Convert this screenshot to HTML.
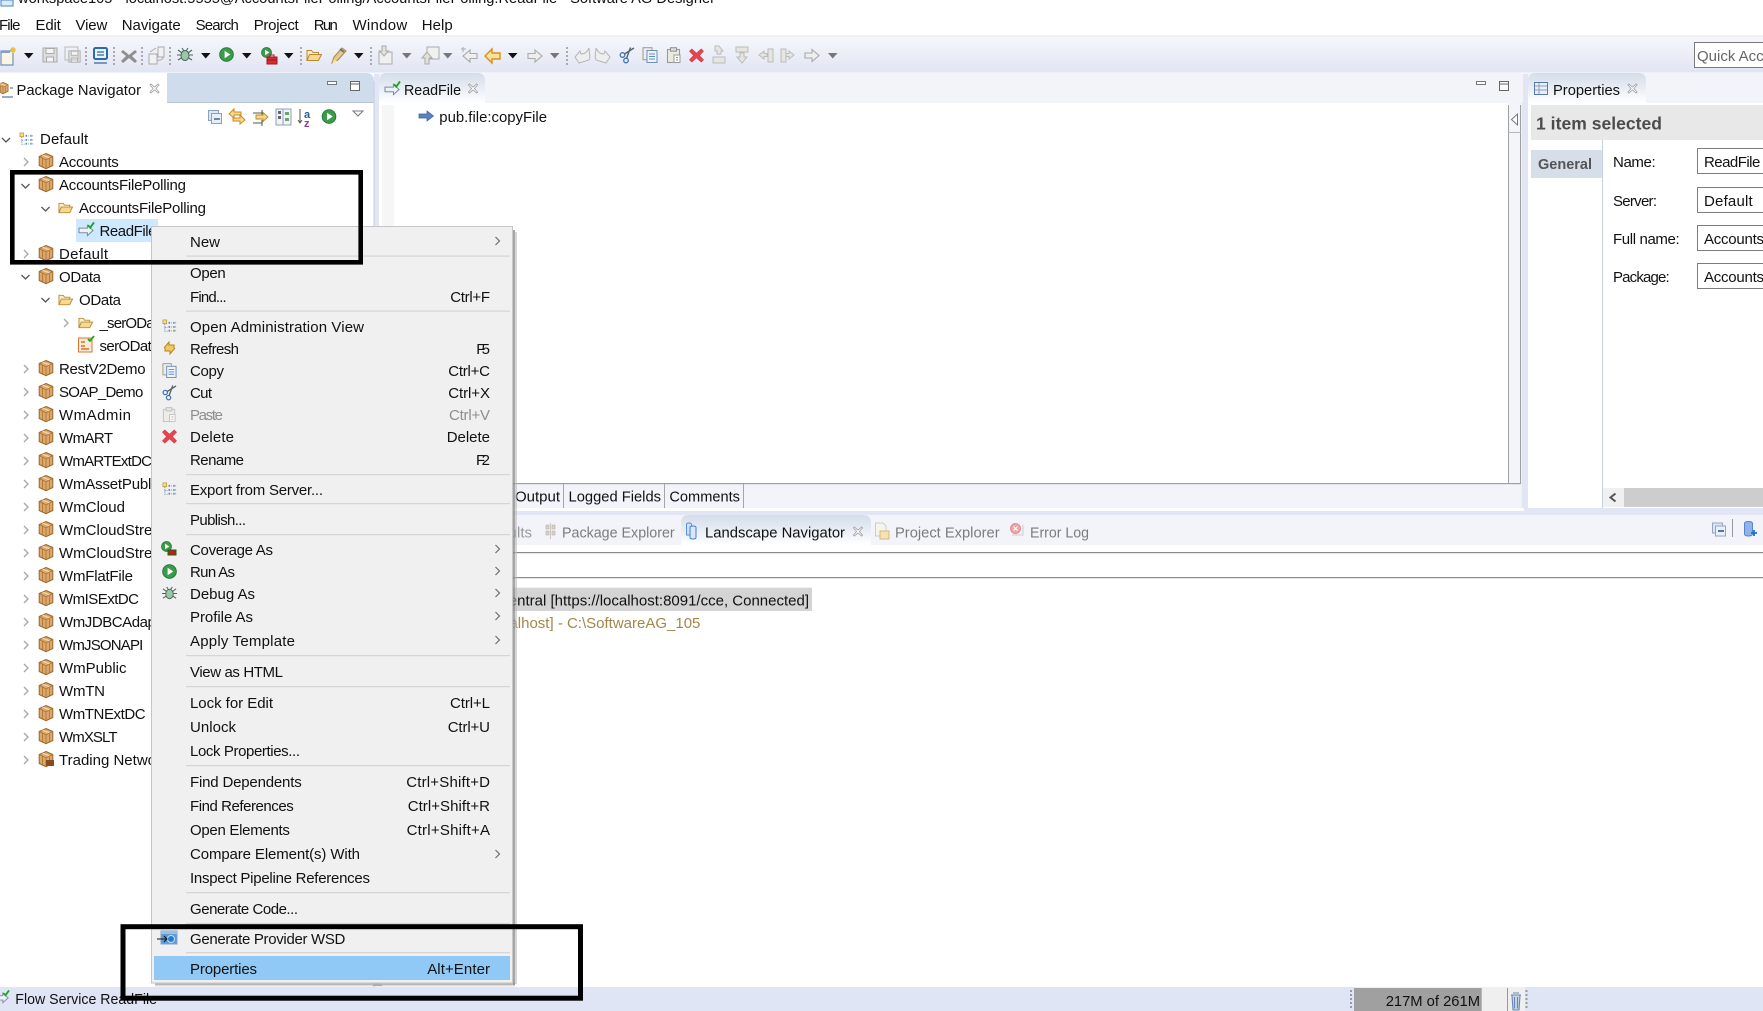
<!DOCTYPE html>
<html><head><meta charset="utf-8"><style>
html,body{margin:0;padding:0;background:#fff;width:1763px;height:1011px;overflow:hidden}
svg{display:block}
text{font-family:"Liberation Sans",sans-serif;font-size:15px;fill:#111;white-space:pre}
.g{fill:#7c7c7c}.d{fill:#8e8e8e}.e{text-anchor:end}
.b{font-weight:bold}
</style></head><body>
<svg width="1763" height="1011" viewBox="0 0 1763 1011" xmlns="http://www.w3.org/2000/svg">
<defs>
<linearGradient id="tb" x1="0" y1="0" x2="0" y2="1"><stop offset="0" stop-color="#f6f7fb"/><stop offset="1" stop-color="#e1e5f3"/></linearGradient>
<linearGradient id="tab" x1="0" y1="0" x2="0" y2="1"><stop offset="0" stop-color="#d3dde9"/><stop offset=".5" stop-color="#e8edf5"/><stop offset="1" stop-color="#fff"/></linearGradient>
<symbol id="pkg" viewBox="0 0 16 16" overflow="visible"><path d="M8 .5 14.8 3.5V12.5L8 15.7 1.2 12.5V3.5Z" fill="#dba76d" stroke="#9c662a"/><path d="M1.2 3.5 8 6.8 14.8 3.5M8 6.8V15.7M4.5 5.2V14M11.5 5.2V14" fill="none" stroke="#a9722f" stroke-width=".8"/><path d="M4.5 2.2 11.5 4.8" stroke="#f3d9b1" stroke-width="1.2"/></symbol>
<symbol id="fld" viewBox="0 0 16 16" overflow="visible"><path d="M1 13.5V3.5h4.5l1.5 2h5.5v2" fill="#fbeec9" stroke="#b98a35"/><path d="M1 13.5 3.5 7.5H15.5L12.5 13.5Z" fill="#f6d98f" stroke="#b98a35"/></symbol>
<symbol id="cr" viewBox="0 0 10 10" overflow="visible"><path d="M3 1 7 5 3 9" fill="none" stroke="#a6a6a6" stroke-width="1.3"/></symbol>
<symbol id="cm" viewBox="0 0 10 10" overflow="visible"><path d="M3 1 7 5 3 9" fill="none" stroke="#666" stroke-width="1.1"/></symbol>
<symbol id="cd" viewBox="0 0 10 10" overflow="visible"><path d="M1 3 5 7 9 3" fill="none" stroke="#555" stroke-width="1.3"/></symbol>
<symbol id="svc" viewBox="0 0 18 16" overflow="visible"><path d="M1 6.5H10V3.5L16 9 10 14.5V11.5H1Z" fill="#eef1f6" stroke="#7c8da3" stroke-width="1.1"/><path d="M10.5 3.5 13 6 17 .5" fill="none" stroke="#1da31d" stroke-width="2"/></symbol>
<symbol id="tree" viewBox="0 0 16 16" overflow="visible"><rect x="1" y="1" width="4" height="4" fill="#f4dd83" stroke="#b79b3a" stroke-width=".8"/><path d="M3 5V13H6M3 9H6" fill="none" stroke="#7a8ba8" stroke-width=".9" stroke-dasharray="1.5 1"/><path d="M7 8.5h3M7 12.5h3M12 8.5h3M12 12.5h3M7 4h3M12 4h3" stroke="#5d83b5" stroke-width="2" stroke-dasharray="1.5 1"/></symbol>
<symbol id="x" viewBox="0 0 12 12" overflow="visible"><path d="M2 1 6 4.5 10 1 11 2 7.500 6 11 10 10 11 6 7.500 2 11 1 10 4.500 6 1 2Z" fill="#fff" stroke="#999" stroke-width=".8"/></symbol>
<symbol id="run" viewBox="0 0 16 16" overflow="visible"><circle cx="8" cy="8" r="7.3" fill="#3a9c4a" stroke="#25763a"/><path d="M6 4 12 8 6 12Z" fill="#fff"/></symbol>
<symbol id="bug" viewBox="0 0 16 16" overflow="visible"><path d="M1 3 5 6M15 3 11 6M0 8H4M16 8H12M1 13 5 10.5M15 13 11 10.5M5 1 7 4M11 1 9 4" stroke="#49695c" stroke-width="1.1"/><ellipse cx="8" cy="8.5" rx="4" ry="5" fill="#9cc6a8" stroke="#49695c"/></symbol>
<symbol id="rx" viewBox="0 0 16 16" overflow="visible"><path d="M3 1 8 5.5 13 1 15.5 3.5 11 8 15.5 12.5 13 15 8 10.5 3 15 .5 12.5 5 8 .5 3.5Z" fill="#e8434f" stroke="#c53a44" stroke-width=".6"/></symbol>
<symbol id="cp" viewBox="0 0 16 16" overflow="visible"><rect x="1" y=".7" width="9" height="12" fill="#e9eef5" stroke="#a59a74"/><rect x="5" y="3.5" width="10" height="12" fill="#eef3fa" stroke="#6f8db5"/><path d="M7 7h6M7 9.500h6M7 12h6" stroke="#5d8fc9"/></symbol>
<symbol id="sc" viewBox="0 0 16 16" overflow="visible"><circle cx="3.500" cy="8" r="2.300" fill="none" stroke="#3f76b3" stroke-width="1.300"/><circle cx="7" cy="13.500" r="2.300" fill="none" stroke="#3f76b3" stroke-width="1.300"/><path d="M5.500 7 15 1M7.500 11.500 11.500 .5" stroke="#56626f" stroke-width="1.400"/></symbol>
<symbol id="pa" viewBox="0 0 16 16" overflow="visible"><rect x="1.500" y="2.500" width="12" height="13" fill="#ece9df" stroke="#9a9a9a" stroke-width="1.100"/><rect x="4.500" y=".7" width="6" height="3.500" fill="#ddd" stroke="#909090"/><rect x="8" y="8" width="6" height="7.500" fill="#fff" stroke="#9a9a9a"/><path d="M10 10.500h2M10 13h2" stroke="#888"/></symbol>
<symbol id="da" viewBox="0 0 10 6" overflow="visible"><path d="M0 0H9.500L4.750 5.500Z" fill="#111"/></symbol>
<symbol id="dg" viewBox="0 0 10 6" overflow="visible"><path d="M0 0H9.500L4.750 5.500Z" fill="#777"/></symbol>
<symbol id="arr" viewBox="0 0 16 14" overflow="visible"><path d="M8 1 15 7 8 13V9.500H1V4.500H8Z" fill="#eee" stroke="#aaa" stroke-width="1.100"/></symbol>
<symbol id="sav" viewBox="0 0 16 16" overflow="visible"><path d="M1 1H15V15H1Z" fill="#ddd" stroke="#aaa"/><rect x="4" y="1.500" width="8" height="5" fill="#f4f4f4" stroke="#aaa"/><rect x="4.500" y="10" width="7" height="5" fill="#f4f4f4" stroke="#aaa"/></symbol>
</defs>

<!-- title + menu -->
<rect width="1763" height="35" fill="#fff"/>
<path d="M1 0H13V6H1Z" fill="#dfeaf7" stroke="#3f86c9"/>
<text x="18" y="3" textLength="697" lengthAdjust="spacingAndGlyphs">workspace105 - localhost:5555@AccountsFilePolling/AccountsFilePolling:ReadFile - Software AG Designer</text>
<text x="-1" y="30" textLength="21.500">File</text><text x="35.500" y="30" textLength="25.300">Edit</text><text x="75.500" y="30" textLength="31.800">View</text><text x="121.700" y="30" textLength="59">Navigate</text><text x="195.600" y="30" textLength="43.200">Search</text><text x="253.700" y="30" textLength="45">Project</text><text x="313.800" y="30" textLength="24">Run</text><text x="352.500" y="30" textLength="54.700">Window</text><text x="421.700" y="30" textLength="31">Help</text>

<!-- toolbar -->
<rect y="35" width="1763" height="2" fill="#f0f0f0"/>
<rect y="37" width="1763" height="35.700" fill="url(#tb)"/>
<rect y="72.700" width="1763" height="1" fill="#fff"/>
<rect y="73.700" width="1763" height="441" fill="#e1e5f4"/>

<g id="tbicons">
<path d="M1 51H13V65H1Z" fill="#fbf5e2" stroke="#6f93bd" stroke-width="1.200"/><path d="M1 51H10V53H1Z" fill="#7fa0cc"/><path d="M13 47v6M10 50h6M11 48l4 4M15 48l-4 4" stroke="#e9c13a" stroke-width="1.300"/>
<use href="#da" x="24" y="53" width="10" height="6"/>
<use href="#sav" x="42" y="47" width="16" height="16"/>
<use href="#sav" x="68" y="50" width="13" height="13"/><rect x="65" y="47" width="13" height="13" fill="none" stroke="#bbb"/>
<path d="M86 47V65M114 47V65M142 47V65M170 47V65M301 47V65M371 47V65M567 47V65" stroke="#9a9a9a" stroke-width="1.600" stroke-dasharray="2 2"/>
<rect x="94" y="48" width="13" height="11" rx="1.500" fill="#eaf1fa" stroke="#2d6aa8" stroke-width="2"/><path d="M94 63H107M97 52h7M97 55h7" stroke="#2d6aa8" stroke-width="1.300"/>
<path d="M123 50l6 5 6-5 2 2-5 4 5 5-2 2-6-5-6 5-2-2 5-5-5-4Z" fill="#8e8e8e"/>
<rect x="149" y="54" width="8" height="10" fill="#f1f1f1" stroke="#aaa"/><rect x="158" y="47" width="6" height="10" fill="#f1f1f1" stroke="#aaa"/><path d="M150 52l6-4M157 60c4 1 6-1 6-3" fill="none" stroke="#aaa"/>
<use href="#bug" x="177" y="47" width="16" height="16"/>
<use href="#da" x="201" y="53" width="10" height="6"/>
<use href="#run" x="219" y="47" width="15" height="15"/>
<use href="#da" x="242" y="53" width="10" height="6"/>
<use href="#run" x="261" y="47" width="11" height="11"/><path d="M267 57h10v7h-10Z" fill="#dd2a32" stroke="#9c1b20"/><path d="M270 57v-2h4v2M267 60h10" stroke="#9c1b20" fill="none"/>
<use href="#da" x="284" y="53" width="10" height="6"/>
<use href="#fld" x="306" y="47" width="16" height="16"/>
<path d="M332 63l2-6 8-9 4 3-8 9Z" fill="#e4c88f" stroke="#a98440"/><path d="M332 64l2-5 3 2Z" fill="#f7e59a"/><path d="M340 49l4 3" stroke="#6f6f8a" stroke-width="2"/>
<use href="#da" x="354" y="53" width="10" height="6"/>
<rect x="379" y="52" width="13" height="12" fill="#f0f0f0" stroke="#aaa"/><path d="M382 46h4v5h2.500l-4.500 5-4.500-5h2.500Z" fill="#e2e2d9" stroke="#aaa"/>
<use href="#dg" x="402" y="53" width="10" height="6"/>
<rect x="427" y="47" width="12" height="12" fill="#f0f0f0" stroke="#aaa"/><path d="M425 64v-6h-3l5-6 5 6h-3v6Z" fill="#e2e2d9" stroke="#aaa"/>
<use href="#dg" x="443" y="53" width="10" height="6"/>
<g transform="matrix(-1 0 0 1 478 0)"><use href="#arr" x="0" y="49" width="16" height="14"/></g>
<path d="M463 47v5M461 49h5" stroke="#aaa"/>
<path d="M485 56 492 49V53H500V59H492V63Z" fill="#fbe29b" stroke="#d98e1e" stroke-width="1.400"/>
<use href="#da" x="508" y="53" width="10" height="6"/>
<use href="#arr" x="527" y="49" width="16" height="14"/>
<use href="#dg" x="550" y="53" width="10" height="6"/>
<path d="M575 57l4 6 10-3c2-3 0-7 0-12-2 4-4 6-8 6l-1-3Z" fill="#eee" stroke="#b5b5b5"/>
<path d="M610 57l-4 6-10-3c-2-3 0-7 0-12 2 4 4 6 8 6l1-3Z" fill="#eee" stroke="#b5b5b5"/>
<use href="#sc" x="619" y="47" width="16" height="16"/>
<use href="#cp" x="642" y="47" width="16" height="16"/>
<use href="#pa" x="666" y="47" width="16" height="16"/>
<use href="#rx" x="689" y="48" width="15" height="15"/>
<path d="M715 46l4-0 4 5h-2v3h-4v-3h-2Zm-2 11h12v6h-12Z" fill="#e6e6de" stroke="#bbb"/>
<path d="M736 47h12v5h-12ZM740 53h4v4h3l-5 6-5-6h3Z" fill="#e6e6de" stroke="#bbb"/>
<path d="M759 55l5-4v2.500h3v3h-3v2.500ZM768 49h5v13h-5Z" fill="#e6e6de" stroke="#bbb"/>
<path d="M794 55l-5-4v2.500h-3v3h3v2.500ZM781 49h5v13h-5Z" fill="#e6e6de" stroke="#bbb"/>
<use href="#arr" x="804" y="48" width="16" height="15"/>
<use href="#dg" x="828" y="53" width="10" height="6"/>
</g>
<rect x="1694.500" y="42.500" width="75" height="25" fill="#fff" stroke="#7a7a7a"/>
<text x="1697" y="61" style="fill:#666">Quick Access</text>

<!-- left pane -->
<rect x="0" y="73" width="374" height="914" fill="#fff"/>
<path d="M167 73H366q8 0 8 8V102.500H167Z" fill="#cfdceb"/>
<path d="M0 73H159q8 0 8 8V102H0Z" fill="#fff"/>
<rect x="167" y="102" width="207" height="1" fill="#b9c5d6"/>
<rect x="373.500" y="81" width="1" height="906" fill="#c8cfdf"/>
<use href="#pkg" x="-3" y="82" width="12" height="12"/><path d="M2 97H13M10 88H13" stroke="#2b5f96"/>
<text x="16.500" y="95" textLength="124.500" lengthAdjust="spacingAndGlyphs">Package Navigator</text>
<use href="#x" x="149" y="83" width="11" height="11"/>
<rect x="327.500" y="81.500" width="9" height="3" fill="#fff" stroke="#777"/>
<rect x="350.500" y="81.500" width="9" height="9" fill="#fff" stroke="#666"/><path d="M350 84H360" stroke="#666"/>
<g>
<rect x="208.500" y="110.500" width="10" height="10" fill="#dde6f2" stroke="#8aa0bd"/><rect x="211.500" y="113.500" width="10" height="10" fill="#e8eef6" stroke="#8aa0bd"/><path d="M214 119h6" stroke="#2a5d95" stroke-width="1.400"/>
<path d="M229 114l5-5v3h7v3h-7v3ZM245 120l-5-5v3h-7v3h7v3Z" fill="#f8dc8e" stroke="#c98a20"/>
<path d="M253 113H262M262 110V116M253 123H262M262 120V126" stroke="#555" fill="none"/>
<path d="M256 115H263V112.500L268 117 263 121.500V119H256Z" fill="#f5d986" stroke="#b98a25" stroke-width=".9"/>
<rect x="276" y="109" width="15" height="16" fill="#f0f3f8" stroke="#8aa0bd"/><path d="M283 109V125" stroke="#8aa0bd"/><rect x="278" y="111" width="3" height="3" fill="#666"/><rect x="278" y="116" width="3" height="3" fill="#666"/><rect x="285" y="112" width="4" height="3" fill="#6ba36b"/><rect x="285" y="118" width="4" height="3" fill="#6ba36b"/>
<path d="M300 109V122M298 120l2 3 2-3" stroke="#555" fill="none"/>
<text x="304" y="118" style="font-size:11px;font-weight:bold;fill:#245d9a">a</text><text x="304" y="127" style="font-size:11px;font-weight:bold;fill:#8a3f8f">z</text>
<use href="#run" x="321.500" y="109" width="15" height="15"/>
<path d="M353 111H363L358 116Z" fill="#fff" stroke="#777"/>
</g>

<!-- tree -->
<use href="#cd" x="1" y="135" width="10" height="10"/><use href="#tree" x="19" y="132" width="15" height="15"/><text x="40" y="144" textLength="48.200">Default</text>
<use href="#cr" x="21" y="157" width="10" height="10"/><use href="#pkg" x="38" y="153" width="16" height="16"/><text x="59" y="167" textLength="59.700">Accounts</text>
<use href="#cd" x="20.500" y="181" width="10" height="10"/><use href="#pkg" x="38" y="176" width="16" height="16"/><text x="59" y="190" textLength="127">AccountsFilePolling</text>
<use href="#cd" x="40.500" y="204" width="10" height="10"/><use href="#fld" x="58" y="200" width="15" height="15"/><text x="79" y="213" textLength="127">AccountsFilePolling</text>
<rect x="76" y="219" width="82" height="23" fill="#cde8ff"/><use href="#svc" x="78" y="222" width="17" height="15"/><text x="99.500" y="236" textLength="57">ReadFile</text>
<use href="#cr" x="21" y="249" width="10" height="10"/><use href="#pkg" x="38" y="245" width="16" height="16"/><text x="59" y="259" textLength="49">Default</text>
<use href="#cd" x="20.500" y="272" width="10" height="10"/><use href="#pkg" x="38" y="268" width="16" height="16"/><text x="59" y="282" textLength="42">OData</text>
<use href="#cd" x="40.500" y="295" width="10" height="10"/><use href="#fld" x="58" y="292" width="15" height="15"/><text x="79" y="305" textLength="42">OData</text>
<use href="#cr" x="61" y="318" width="10" height="10"/><use href="#fld" x="78" y="315" width="15" height="15"/><text x="99.500" y="328" textLength="66">_serOData</text>
<path d="M78.500 338H92V352H78.500Z" fill="#fbeadb" stroke="#d8742a"/><path d="M81 342h4M81 346h4M81 349h8" stroke="#d8742a" stroke-width="1.500"/><path d="M88 339 90 341 94 336" fill="none" stroke="#1da31d" stroke-width="1.800"/><text x="99.500" y="351" textLength="60">serOData</text>
<use href="#cr" x="21" y="364" width="10" height="10"/><use href="#pkg" x="38" y="360" width="16" height="16"/><text x="59" y="374" textLength="86.600">RestV2Demo</text>
<use href="#cr" x="21" y="387" width="10" height="10"/><use href="#pkg" x="38" y="383" width="16" height="16"/><text x="59" y="397" textLength="84.300">SOAP_Demo</text>
<use href="#cr" x="21" y="410" width="10" height="10"/><use href="#pkg" x="38" y="406" width="16" height="16"/><text x="59" y="420" textLength="72">WmAdmin</text>
<use href="#cr" x="21" y="433" width="10" height="10"/><use href="#pkg" x="38" y="429" width="16" height="16"/><text x="59" y="443" textLength="54">WmART</text>
<use href="#cr" x="21" y="456" width="10" height="10"/><use href="#pkg" x="38" y="452" width="16" height="16"/><text x="59" y="466" textLength="93">WmARTExtDC</text>
<use href="#cr" x="21" y="479" width="10" height="10"/><use href="#pkg" x="38" y="475" width="16" height="16"/><text x="59" y="489" textLength="124">WmAssetPublisher</text>
<use href="#cr" x="21" y="502" width="10" height="10"/><use href="#pkg" x="38" y="498" width="16" height="16"/><text x="59" y="512" textLength="66">WmCloud</text>
<use href="#cr" x="21" y="525" width="10" height="10"/><use href="#pkg" x="38" y="521" width="16" height="16"/><text x="59" y="535">WmCloudStreams</text>
<use href="#cr" x="21" y="548" width="10" height="10"/><use href="#pkg" x="38" y="544" width="16" height="16"/><text x="59" y="558">WmCloudStreamsAnalytics</text>
<use href="#cr" x="21" y="571" width="10" height="10"/><use href="#pkg" x="38" y="567" width="16" height="16"/><text x="59" y="581" textLength="74">WmFlatFile</text>
<use href="#cr" x="21" y="594" width="10" height="10"/><use href="#pkg" x="38" y="590" width="16" height="16"/><text x="59" y="604" textLength="80">WmISExtDC</text>
<use href="#cr" x="21" y="617" width="10" height="10"/><use href="#pkg" x="38" y="613" width="16" height="16"/><text x="59" y="627" textLength="113">WmJDBCAdapter</text>
<use href="#cr" x="21" y="640" width="10" height="10"/><use href="#pkg" x="38" y="636" width="16" height="16"/><text x="59" y="650" textLength="84.300">WmJSONAPI</text>
<use href="#cr" x="21" y="663" width="10" height="10"/><use href="#pkg" x="38" y="659" width="16" height="16"/><text x="59" y="673" textLength="67.500">WmPublic</text>
<use href="#cr" x="21" y="686" width="10" height="10"/><use href="#pkg" x="38" y="682" width="16" height="16"/><text x="59" y="696" textLength="46">WmTN</text>
<use href="#cr" x="21" y="709" width="10" height="10"/><use href="#pkg" x="38" y="705" width="16" height="16"/><text x="59" y="719" textLength="86.600">WmTNExtDC</text>
<use href="#cr" x="21" y="732" width="10" height="10"/><use href="#pkg" x="38" y="728" width="16" height="16"/><text x="59" y="742" textLength="58.500">WmXSLT</text>
<use href="#cr" x="21" y="755" width="10" height="10"/><use href="#pkg" x="38" y="751" width="16" height="16"/><rect x="46" y="760" width="8" height="6" fill="#8a4a20"/><text x="59" y="765">Trading Networks</text>

<!-- editor -->
<rect x="379" y="73" width="1144" height="30" fill="#f3f4fa"/>
<rect x="379" y="102.500" width="1142.700" height="405.500" fill="#f3f4fa"/>
<rect x="379" y="103" width="1129" height="380" fill="#fff"/>
<path d="M379 103V81q0-8 8-8H477q8 0 8 8V103Z" fill="url(#tab)"/>
<use href="#svc" x="384" y="81" width="17" height="15"/>
<text x="404" y="95" textLength="57" lengthAdjust="spacingAndGlyphs">ReadFile</text>
<use href="#x" x="467.500" y="83" width="11" height="11"/>
<rect x="1476.500" y="81.500" width="9" height="3" fill="#fff" stroke="#777"/>
<rect x="1499.500" y="81.500" width="9" height="9" fill="#fff" stroke="#666"/><path d="M1499 84H1509" stroke="#666"/>
<rect x="382" y="105" width="12" height="378" fill="#f6f6f6"/>
<path d="M419 114H427V111L433.500 116 427 121V118H419Z" fill="#5b83c4" stroke="#3c5f9c" stroke-width=".7"/>
<text x="439.300" y="122" textLength="107.700" lengthAdjust="spacingAndGlyphs">pub.file:copyFile</text>
<rect x="1508" y="105" width="13" height="378" fill="#f4f5fa"/>
<path d="M1508.500 105V483M1520.500 105V483" stroke="#a0a0a0"/><path d="M1508 132.500H1521" stroke="#b5b5b5"/>
<path d="M1517.500 114V125L1511.500 119.500Z" fill="#fff" stroke="#777"/>
<rect x="379" y="483" width="1142" height="1.200" fill="#a0a0a0"/>
<path d="M563.500 484V508M664.500 484V508M743.500 484V508" stroke="#a6a6a6"/>
<text x="515" y="501.500" textLength="45">Output</text><text x="568.500" y="501.500" textLength="92.500" lengthAdjust="spacingAndGlyphs">Logged Fields</text><text x="669.400" y="501.500" textLength="70.600" lengthAdjust="spacingAndGlyphs">Comments</text>
<rect x="379" y="508" width="1145" height="3" fill="#fff"/>

<!-- properties -->
<rect x="1528" y="73" width="235" height="435" fill="#fff"/>
<rect x="1528" y="73" width="235" height="30" fill="#f3f4fa"/>
<path d="M1528 103V81q0-8 8-8H1638q8 0 8 8V103Z" fill="url(#tab)"/>
<rect x="1534.500" y="82.500" width="13" height="12" fill="#e9eef7" stroke="#5b7aa8"/><path d="M1535 86H1547M1535 90H1547M1539 83V94" stroke="#8aa0bd"/>
<text x="1553" y="95" textLength="67" lengthAdjust="spacingAndGlyphs">Properties</text>
<use href="#x" x="1627" y="83" width="11" height="11"/>
<rect x="1531" y="105" width="232" height="35" fill="#e8e8e8"/>
<text x="1536" y="129.500" class="b" style="font-size:17.500px;fill:#4c4c4c" textLength="126">1 item selected</text>
<rect x="1531" y="150" width="71" height="28" fill="#d6dfe9"/>
<text x="1538" y="169" class="b" style="font-size:14.500px;fill:#555" textLength="54">General</text>
<rect x="1602" y="140" width="1" height="368" fill="#c5d0e0"/>
<text x="1613" y="167" textLength="42.700">Name:</text><text x="1613" y="206" textLength="44">Server:</text><text x="1613" y="244" textLength="66.700">Full name:</text><text x="1613" y="282" textLength="56.700">Package:</text>
<g fill="#fff" stroke="#7d7d7d"><rect x="1697.500" y="148.500" width="80" height="25"/><rect x="1697.500" y="187.500" width="80" height="25"/><rect x="1697.500" y="225.500" width="80" height="25"/><rect x="1697.500" y="263.500" width="80" height="25"/></g>
<text x="1704" y="167" textLength="56.300">ReadFile</text><text x="1704" y="206" textLength="48.700">Default</text><text x="1704" y="244" textLength="60">Accounts</text><text x="1704" y="282" textLength="60">Accounts</text>
<rect x="1603" y="488" width="21" height="19" fill="#f0f0f0"/><rect x="1624" y="488" width="139" height="19" fill="#cdcdcd"/>
<path d="M1615.500 493.500 1610.500 497.500 1615.500 501.500" fill="none" stroke="#555" stroke-width="2"/>

<!-- bottom pane -->
<rect x="379" y="515" width="1384" height="30" fill="#f3f4fa"/>
<rect x="379" y="511" width="1384" height="4" fill="#e1e5f4"/>
<rect x="379" y="545" width="1384" height="442" fill="#fff"/>
<rect x="379" y="552" width="1384" height="1.200" fill="#8a8a8a"/>
<rect x="379" y="577" width="1384" height="1.200" fill="#8a8a8a"/>
<text x="482" y="537.500" style="fill:#999">Results</text>
<path d="M546 525h3v4h-3ZM552 525h3v4h-3ZM546 531h3v4h-3ZM552 531h3v4h-3ZM550.500 523V539" fill="#e6d2bd" stroke="#aaa" stroke-width=".6"/>
<text x="562" y="537.500" class="g" textLength="112.700" lengthAdjust="spacingAndGlyphs">Package Explorer</text>
<path d="M681 545V523q0-8 8-8H863q8 0 8 8V545Z" fill="url(#tab)"/>
<path d="M686.500 524.500q0-1.500 2.500-1.500t2.500 1.500V535H686.500Z" fill="#cfe0f7" stroke="#5a8fd8"/><path d="M690 527.500q0-1.500 3-1.500t3 1.500V537.500q0 1.500-3 1.500t-3-1.500Z" fill="#d8e7fa" stroke="#3f7fd4"/>
<text x="705" y="537.500" textLength="140" lengthAdjust="spacingAndGlyphs">Landscape Navigator</text>
<use href="#x" x="852.500" y="526" width="11" height="11"/>
<path d="M875.500 523H883L886 526V536H875.500Z" fill="#f5f5ee" stroke="#ccc"/><path d="M880 531H889V539H880Z" fill="#f6e3b5" stroke="#d6b878"/>
<text x="895" y="537.500" class="g" textLength="104.600" lengthAdjust="spacingAndGlyphs">Project Explorer</text>
<path d="M1012 535h11v-10" fill="none" stroke="#ccc"/><circle cx="1015.500" cy="528.500" r="5" fill="#eba6a6" stroke="#dd9090"/><path d="M1013.500 526.500l4 4M1017.500 526.500l-4 4" stroke="#fff" stroke-width="1.100"/>
<text x="1030" y="537.500" class="g" textLength="59" lengthAdjust="spacingAndGlyphs">Error Log</text>
<rect x="1712.500" y="523" width="10" height="10" fill="#dde6f2" stroke="#93a5bd"/><rect x="1715.500" y="526" width="10" height="10" fill="#eaf0f8" stroke="#93a5bd"/><path d="M1718 531H1724" stroke="#1e4e88" stroke-width="1.500"/>
<rect x="1732" y="519" width="1" height="18" fill="#999"/>
<path d="M1744.500 523.500q0-2 4-2t4 2V534q0 2-4 2t-4-2Z" fill="#8fb3ec" stroke="#5b83c4"/><path d="M1751 533H1757M1754 530V536" stroke="#1e6ee0" stroke-width="1.800"/>
<rect x="450" y="587.700" width="362" height="23.300" fill="#d4d4d4"/>
<text x="809" y="605.500" class="e">Central [https://localhost:8091/cce, Connected]</text>
<text x="700.400" y="628" class="e" style="fill:#a48648">[localhost] - C:\SoftwareAG_105</text>

<!-- status bar -->
<rect x="0" y="987" width="1763" height="24" fill="#e0e5f5"/>
<use href="#svc" x="-6" y="990" width="16" height="14"/>
<text x="15.300" y="1004" textLength="141.700" lengthAdjust="spacingAndGlyphs">Flow Service ReadFile</text>
<path d="M1351 990V1008M1526.500 990V1008" stroke="#9a9a9a" stroke-width="2" stroke-dasharray="2 2"/>
<rect x="1354" y="987" width="171" height="24" fill="#efefef"/>
<rect x="1354" y="988" width="127.700" height="23" fill="#a0a0a0"/>
<rect x="1507" y="988" width="1" height="23" fill="#999"/>
<text x="1385.700" y="1006" textLength="94.300" lengthAdjust="spacingAndGlyphs">217M of 261M</text>
<path d="M1511 995H1521M1513 993H1519M1512 995.500 1513 1010H1519L1520 995.500M1514.500 997V1008.500M1517.500 997V1008.500" fill="#cbd6e8" stroke="#6688b5" stroke-width="1.100"/>

<!-- context menu -->
<rect x="513" y="230" width="2" height="755" fill="#888" opacity=".75"/>
<rect x="515" y="232" width="2" height="752" fill="#bbb" opacity=".6"/>
<rect x="155" y="983" width="360" height="2" fill="#888" opacity=".6"/>
<rect x="155" y="985" width="360" height="1.500" fill="#bbb" opacity=".5"/>
<path d="M372 986 378 982 383 986Z" fill="#aab"/>
<rect x="151.500" y="226.500" width="361" height="756.500" fill="#f0f0f0" stroke="#c6c6c6"/>
<g fill="#d5d5d5"><rect x="186" y="255.500" width="324" height="1.200"/><rect x="186" y="310.500" width="324" height="1.200"/><rect x="186" y="474" width="324" height="1.200"/><rect x="186" y="503" width="324" height="1.200"/><rect x="186" y="534" width="324" height="1.200"/><rect x="186" y="655" width="324" height="1.200"/><rect x="186" y="686" width="324" height="1.200"/><rect x="186" y="765" width="324" height="1.200"/><rect x="186" y="892" width="324" height="1.200"/><rect x="186" y="923" width="324" height="1.200"/><rect x="186" y="952" width="324" height="1.200"/></g>
<rect x="154" y="956" width="356" height="24" fill="#90c8f6"/>

<g>
<text x="190" y="247" textLength="30">New</text>
<text x="190" y="278" textLength="35.700">Open</text>
<text x="190" y="302" textLength="36.700">Find...</text><text x="490" y="302" class="e" textLength="39.800">Ctrl+F</text>
<text x="190" y="332" textLength="174">Open Administration View</text>
<text x="190" y="354" textLength="49">Refresh</text><text x="490" y="354" class="e" textLength="13.700">F5</text>
<text x="190" y="376" textLength="34">Copy</text><text x="490" y="376" class="e" textLength="41.700">Ctrl+C</text>
<text x="190" y="398" textLength="22">Cut</text><text x="490" y="398" class="e" textLength="41.700">Ctrl+X</text>
<text x="190" y="420" class="d" textLength="33">Paste</text><text x="490" y="420" class="e d" textLength="41">Ctrl+V</text>
<text x="190" y="442" textLength="44">Delete</text><text x="490" y="442" class="e" textLength="43.300">Delete</text>
<text x="190" y="465" textLength="54">Rename</text><text x="490" y="465" class="e" textLength="14">F2</text>
<text x="190" y="495" textLength="133">Export from Server...</text>
<text x="190" y="525" textLength="56">Publish...</text>
<text x="190" y="555" textLength="83">Coverage As</text>
<text x="190" y="577" textLength="45">Run As</text>
<text x="190" y="599" textLength="65">Debug As</text>
<text x="190" y="622" textLength="63">Profile As</text>
<text x="190" y="646" textLength="105">Apply Template</text>
<text x="190" y="677" textLength="93">View as HTML</text>
<text x="190" y="708" textLength="83">Lock for Edit</text><text x="490" y="708" class="e" textLength="40">Ctrl+L</text>
<text x="190" y="732" textLength="46">Unlock</text><text x="490" y="732" class="e" textLength="42.300">Ctrl+U</text>
<text x="190" y="756" textLength="110">Lock Properties...</text>
<text x="190" y="787" textLength="111.700">Find Dependents</text><text x="490" y="787" class="e" textLength="83.800">Ctrl+Shift+D</text>
<text x="190" y="811" textLength="103.700">Find References</text><text x="490" y="811" class="e" textLength="82.300">Ctrl+Shift+R</text>
<text x="190" y="835" textLength="99.900">Open Elements</text><text x="490" y="835" class="e" textLength="83.400">Ctrl+Shift+A</text>
<text x="190" y="859" textLength="170">Compare Element(s) With</text>
<text x="190" y="883" textLength="180">Inspect Pipeline References</text>
<text x="190" y="914" textLength="108">Generate Code...</text>
<text x="190" y="944" textLength="155.400">Generate Provider WSD</text>
<text x="190" y="974" textLength="67">Properties</text><text x="490" y="974" class="e" textLength="62.800">Alt+Enter</text>
</g>
<g><use href="#cm" x="492.500" y="236" width="10" height="10"/><use href="#cm" x="492.500" y="544" width="10" height="10"/><use href="#cm" x="492.500" y="566" width="10" height="10"/><use href="#cm" x="492.500" y="588" width="10" height="10"/><use href="#cm" x="492.500" y="611" width="10" height="10"/><use href="#cm" x="492.500" y="635" width="10" height="10"/><use href="#cm" x="492.500" y="849" width="10" height="10"/></g>
<!-- menu icons -->
<use href="#tree" x="162" y="319" width="15" height="15"/>
<g transform="translate(162 341)"><path d="M2 7l5-6v3h5v3M13 7l-5 6v-3H3V7" fill="#f3c95e" stroke="#b58420"/></g>
<use href="#cp" x="162" y="363" width="15" height="15"/>
<use href="#sc" x="162" y="385" width="15" height="15"/>
<g opacity=".5"><use href="#pa" x="162" y="407" width="15" height="15"/></g>
<use href="#rx" x="162" y="429" width="15" height="15"/>
<use href="#tree" x="162" y="482" width="15" height="15"/>
<use href="#run" x="161" y="541" width="11" height="11"/><rect x="168" y="550" width="8" height="5" fill="#c91a1a" stroke="#0d6b0d"/>
<use href="#run" x="162" y="564" width="15" height="15"/>
<use href="#bug" x="162" y="586" width="15" height="15"/>
<rect x="161" y="931" width="16" height="13" fill="#5d9bd8" stroke="#7fa3c9"/><rect x="161" y="931" width="16" height="3" fill="#9fbfe0"/><circle cx="171" cy="939" r="3.500" fill="#2a78c8" stroke="#bfe0fa"/><path d="M157 939H167M164 936l3 3-3 3" stroke="#111" fill="none"/>

<!-- black annotation rects -->
<rect x="12.300" y="172.300" width="348.400" height="90" fill="none" stroke="#000" stroke-width="4.600"/>
<rect x="123" y="926.700" width="457.500" height="71.500" fill="none" stroke="#000" stroke-width="5"/>
</svg>
</body></html>
